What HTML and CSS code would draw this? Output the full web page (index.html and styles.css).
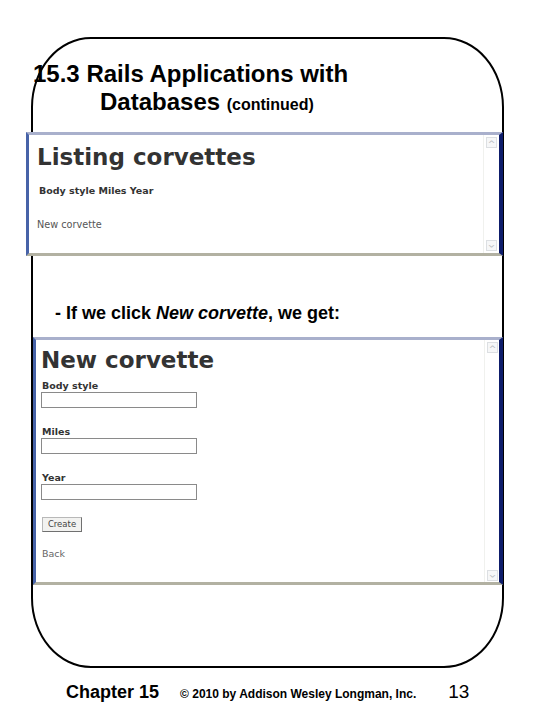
FILE: index.html
```html
<!DOCTYPE html>
<html>
<head>
<meta charset="utf-8">
<link rel="stylesheet" href="styles.css">
</head>
<body>
<div class="slide">
  <div class="title">
    <div class="t1">15.3 Rails Applications with</div>
    <div class="t2">Databases <span class="cont">(continued)</span></div>
  </div>

  <div class="frame frame1">
    <div class="page">
      <div class="h1">Listing corvettes</div>
      <div class="cols">Body style Miles Year</div>
      <div class="link">New corvette</div>
    </div>
    <div class="scroll">
      <div class="arrow">&#94;</div>
      <div class="arrow down">&#94;</div>
    </div>
  </div>

  <div class="bullet">- If we click <i>New corvette</i>, we get:</div>

  <div class="frame frame2">
    <div class="page page2">
      <div class="h1 h1b">New corvette</div>
      <div class="label">Body style</div>
      <div class="input"></div>
      <div class="label gap">Miles</div>
      <div class="input"></div>
      <div class="label gap">Year</div>
      <div class="input"></div>
      <div class="btn">Create</div>
      <div class="back">Back</div>
    </div>
    <div class="scroll scroll2">
      <div class="arrow">&#94;</div>
      <div class="arrow down">&#94;</div>
    </div>
  </div>
</div>

<div class="footer">
  <span class="chapter">Chapter 15</span>
  <span class="copy">&copy; 2010 by Addison Wesley Longman, Inc.</span>
  <span class="num">13</span>
</div>
</body>
</html>
```

FILE: styles.css
```css
html, body {
  margin: 0;
  padding: 0;
  background: #fff;
}
body {
  width: 540px;
  height: 720px;
  overflow: hidden;
  font-family: "Liberation Sans", Arial, sans-serif;
  color: #000;
}
.slide {
  box-sizing: border-box;
  margin: 37px 0 0 31px;
  width: 473px;
  height: 631px;
  border: 2px solid #000;
  border-radius: 60px / 70px;
  display: flex;
  flex-direction: column;
}
.title {
  margin-top: 21px;
  font-size: 24px;
  font-weight: bold;
  line-height: 28px;
}
.t2 {
  padding-left: 67px;
}
.cont {
  font-size: 16px;
  line-height: 16px;
}
.frame {
  box-sizing: border-box;
  display: flex;
  background: #fff;
  border-top: 3px solid #a9b0cc;
  border-left: 3px solid #4763a8;
  border-right: 4px solid #0d1c6b;
  border-bottom: 3px solid #b2b1a2;
  font-family: "DejaVu Sans", Verdana, sans-serif;
  color: #333;
}
.frame1 {
  margin-top: 16px;
  margin-left: -7px;
  width: 477px;
  height: 124px;
}
.frame2 {
  margin-top: 13px;
  width: 470px;
  height: 248px;
}
.page {
  flex: 1;
  padding: 8px 0 0 8px;
  display: flex;
  flex-direction: column;
  align-items: flex-start;
}
.page2 {
  padding: 7px 0 0 5px;
}
.h1 {
  font-size: 23px;
  font-weight: bold;
  line-height: 28px;
  color: #333;
}
.h1b {
  line-height: 26px;
}
.cols {
  margin-top: 14px;
  margin-left: 2px;
  font-size: 9.5px;
  font-weight: bold;
  line-height: 12px;
  color: #333;
}
.link {
  margin-top: 22px;
  font-size: 9.7px;
  line-height: 12px;
  color: #555;
}
.label {
  margin-top: 7px;
  margin-left: 1px;
  font-size: 9.5px;
  font-weight: bold;
  line-height: 12px;
  color: #333;
}
.label.gap {
  margin-top: 18px;
}
.input {
  box-sizing: border-box;
  width: 156px;
  height: 16px;
  border: 1px solid #8a8a8a;
  background: #fff;
}
.btn {
  box-sizing: border-box;
  margin-top: 17px;
  margin-left: 1px;
  width: 40px;
  height: 15px;
  border: 1px solid #b8b8b8;
  border-right-color: #707070;
  border-bottom-color: #707070;
  background: #f2f2f0;
  font-size: 8.5px;
  line-height: 13px;
  text-align: center;
  color: #444;
}
.back {
  margin-top: 16px;
  margin-left: 1px;
  font-size: 9.5px;
  line-height: 12px;
  color: #666;
}
.scroll {
  width: 13px;
  border-left: 1px solid #f0f1ee;
  display: flex;
  flex-direction: column;
  justify-content: space-between;
  align-items: flex-end;
  padding: 2px 2px 2px 0;
}
.scroll2 {
  padding: 2px 1px 1px 0;
}
.arrow {
  box-sizing: border-box;
  width: 11px;
  height: 11px;
  border: 1px solid #dcdfe2;
  background: #f6f7f8;
  color: #b8bcc0;
  font-size: 9px;
  line-height: 12px;
  text-align: center;
  font-family: "DejaVu Sans", sans-serif;
}
.arrow.down {
  transform: rotate(180deg);
}
.bullet {
  margin-top: 46px;
  padding-left: 22px;
  font-size: 18px;
  font-weight: bold;
  line-height: 22px;
}
.footer {
  margin-top: 13px;
  display: flex;
  align-items: baseline;
  line-height: 22px;
  padding-left: 66px;
}
.chapter {
  font-size: 18px;
  font-weight: bold;
}
.copy {
  margin-left: 21px;
  font-size: 12px;
  font-weight: bold;
}
.num {
  margin-left: 32px;
  font-size: 19px;
}
```
